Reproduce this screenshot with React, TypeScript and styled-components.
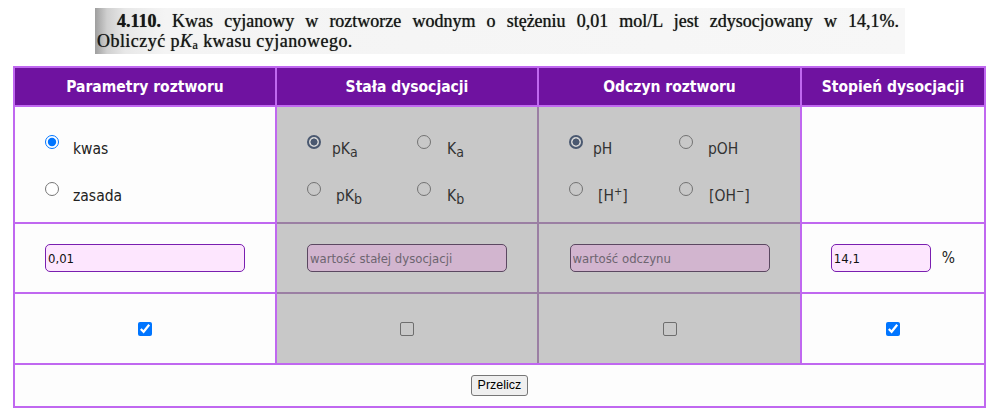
import styled, { createGlobalStyle } from "styled-components";

const GlobalStyle = createGlobalStyle`
  body {
    margin: 0;
    background: #ffffff;
    font-family: "DejaVu Sans", Verdana, sans-serif;
  }
`;

const Page = styled.div`
  padding-top: 8px;
`;

const Scan = styled.div`
  width: 810px;
  height: 46px;
  margin: 0 auto 12px;
  box-sizing: border-box;
  padding-top: 3px;
  background: linear-gradient(90deg, #9e9e9e 0px, #cfcfcf 12px, #e8e8e8 30px, #f4f4f4 70px, #f7f7f7 100%);
  font-family: "Liberation Serif", "Times New Roman", serif;
  font-size: 18px;
  line-height: 20px;
  color: #161616;
  text-shadow: 0 0 0.7px rgba(0, 0, 0, 0.7);
`;

const ScanLine = styled.div<{ $indent: number; $justify?: boolean }>`
  padding-left: ${(p) => p.$indent}px;
  padding-right: 6px;
  text-align: ${(p) => (p.$justify ? "justify" : "left")};
  text-align-last: ${(p) => (p.$justify ? "justify" : "left")};
  white-space: ${(p) => (p.$justify ? "normal" : "nowrap")};
  letter-spacing: ${(p) => (p.$justify ? "0" : "0.45px")};
`;

const Table = styled.div`
  margin-left: 13px;
  width: 973px;
  box-sizing: border-box;
  display: grid;
  grid-template-columns: 260px 260px 261px 182px;
  grid-template-rows: 37px 115px 68px 69px 41px;
  gap: 2px;
  padding: 2px;
  background: #c068f0;
  font-stretch: semi-condensed;
`;

const HeadCell = styled.div`
  background: #6f12a0;
  color: #ffffff;
  font-weight: bold;
  font-size: 15.5px;
  display: flex;
  align-items: center;
  justify-content: center;
`;

const Cell = styled.div<{ $center?: boolean }>`
  background: #fdfdfd;
  color: #222;
  display: flex;
  align-items: ${(p) => (p.$center ? "center" : "flex-start")};
  justify-content: ${(p) => (p.$center ? "center" : "flex-start")};
`;

const DisabledGroup = styled.div`
  grid-column: 2 / 4;
  grid-row: 2 / 5;
  display: grid;
  grid-template-columns: 260px 261px;
  grid-template-rows: 115px 68px 69px;
  gap: 2px;
  background: #9b7fa3;
`;

const GreyCell = styled(Cell)`
  background: #c8c8c8;
  color: #333;
`;

const FullRow = styled(Cell)`
  grid-column: 1 / -1;
`;

const RadioGrid = styled.div<{ $cols: string }>`
  display: grid;
  grid-template-columns: ${(p) => p.$cols};
  grid-auto-rows: 47px;
  padding: 28px 0 0 30px;
  font-size: 15.5px;
  line-height: 18px;
`;

const Radio = styled.input.attrs({ type: "radio" })`
  margin: 0;
  width: 14px;
  height: 14px;
`;

const GreyRadio = styled.input.attrs({ type: "radio" })`
  appearance: none;
  margin: 0;
  width: 14px;
  height: 14px;
  box-sizing: border-box;
  border-radius: 50%;
  border: 1px solid #727272;
  background: transparent;

  &:checked {
    border: 2px solid #4a5870;
    background: radial-gradient(circle, #4a5870 0 3.2px, #d4d4d4 3.8px);
  }
`;

const OptionLabel = styled.span<{ $indent?: number }>`
  margin-top: 5px;
  padding-left: ${(p) => p.$indent ?? 0}px;
  white-space: nowrap;
`;

const Sub = styled.sub`
  font-size: 14px;
  vertical-align: -3px;
  line-height: 0;
`;

const Sup = styled.sup`
  font-size: 11px;
  vertical-align: 6px;
  line-height: 0;
`;

const ValueInput = styled.input<{ $width?: number; $muted?: boolean }>`
  width: ${(p) => p.$width ?? 200}px;
  height: 28px;
  box-sizing: border-box;
  margin: 0;
  padding: 0 2px;
  border: 1px solid ${(p) => (p.$muted ? "#5b4861" : "#7a1fb0")};
  border-radius: 5px;
  background: ${(p) => (p.$muted ? "#d2b5cf" : "#fde6fe")};
  font-family: "DejaVu Sans", Verdana, sans-serif;
  font-stretch: semi-condensed;
  font-size: 13px;
  color: #111;
  outline: none;

  &::placeholder {
    color: #6d6570;
  }
`;

const Unit = styled.span`
  margin-left: 11px;
  font-size: 15.5px;
`;

const Check = styled.input.attrs({ type: "checkbox" })`
  margin: 0;
  width: 14px;
  height: 14px;
`;

const GreyCheck = styled.input.attrs({ type: "checkbox" })`
  appearance: none;
  margin: 0;
  width: 14px;
  height: 14px;
  box-sizing: border-box;
  border: 1px solid #6e6e6e;
  border-radius: 2px;
  background: transparent;
`;

const Button = styled.button`
  font-family: "Liberation Sans", Arial, sans-serif;
  font-size: 12.5px;
  line-height: 17px;
  padding: 1px 6px;
  border: 1px solid #767676;
  border-radius: 3px;
  background: #efefef;
  color: #000;
`;

export default function App() {
  return (
    <>
      <GlobalStyle />
      <Page>
        <Scan>
          <ScanLine $indent={22} $justify>
            <b>4.110.</b> Kwas cyjanowy w roztworze wodnym o stężeniu 0,01 mol/L jest zdysocjowany w 14,1%.
          </ScanLine>
          <ScanLine $indent={2}>
            Obliczyć p<i>K</i>
            <Sub style={{ fontSize: "12px", verticalAlign: "-2px" }}>a</Sub> kwasu cyjanowego.
          </ScanLine>
        </Scan>

        <Table>
          <HeadCell>Parametry roztworu</HeadCell>
          <HeadCell>Stała dysocjacji</HeadCell>
          <HeadCell>Odczyn roztworu</HeadCell>
          <HeadCell>Stopień dysocjacji</HeadCell>

          <Cell>
            <RadioGrid $cols="28px auto">
              <Radio name="type" defaultChecked />
              <OptionLabel>kwas</OptionLabel>
              <Radio name="type" />
              <OptionLabel>zasada</OptionLabel>
            </RadioGrid>
          </Cell>

          <DisabledGroup>
            <GreyCell>
              <RadioGrid $cols="25px 85px 30px auto">
                <GreyRadio name="const" defaultChecked />
                <OptionLabel>
                  pK<Sub>a</Sub>
                </OptionLabel>
                <GreyRadio name="const" />
                <OptionLabel>
                  K<Sub>a</Sub>
                </OptionLabel>
                <GreyRadio name="const" />
                <OptionLabel $indent={4}>
                  pK<Sub>b</Sub>
                </OptionLabel>
                <GreyRadio name="const" />
                <OptionLabel>
                  K<Sub>b</Sub>
                </OptionLabel>
              </RadioGrid>
            </GreyCell>
            <GreyCell>
              <RadioGrid $cols="24px 86px 29px auto">
                <GreyRadio name="ph" defaultChecked />
                <OptionLabel>pH</OptionLabel>
                <GreyRadio name="ph" />
                <OptionLabel>pOH</OptionLabel>
                <GreyRadio name="ph" />
                <OptionLabel $indent={5}>
                  [H<Sup>+</Sup>]
                </OptionLabel>
                <GreyRadio name="ph" />
                <OptionLabel $indent={1}>
                  [OH<Sup>−</Sup>]
                </OptionLabel>
              </RadioGrid>
            </GreyCell>

            <GreyCell $center>
              <ValueInput $muted placeholder="wartość stałej dysocjacji" />
            </GreyCell>
            <GreyCell $center>
              <ValueInput $muted placeholder="wartość odczynu" />
            </GreyCell>

            <GreyCell $center>
              <GreyCheck />
            </GreyCell>
            <GreyCell $center>
              <GreyCheck />
            </GreyCell>
          </DisabledGroup>

          <Cell />

          <Cell $center style={{ gridColumn: 1, gridRow: 3 }}>
            <ValueInput defaultValue="0,01" />
          </Cell>
          <Cell $center style={{ gridColumn: 4, gridRow: 3 }}>
            <ValueInput $width={100} defaultValue="14,1" />
            <Unit>%</Unit>
          </Cell>

          <Cell $center style={{ gridColumn: 1, gridRow: 4 }}>
            <Check defaultChecked />
          </Cell>
          <Cell $center style={{ gridColumn: 4, gridRow: 4 }}>
            <Check defaultChecked />
          </Cell>

          <FullRow $center>
            <Button>Przelicz</Button>
          </FullRow>
        </Table>
      </Page>
    </>
  );
}
